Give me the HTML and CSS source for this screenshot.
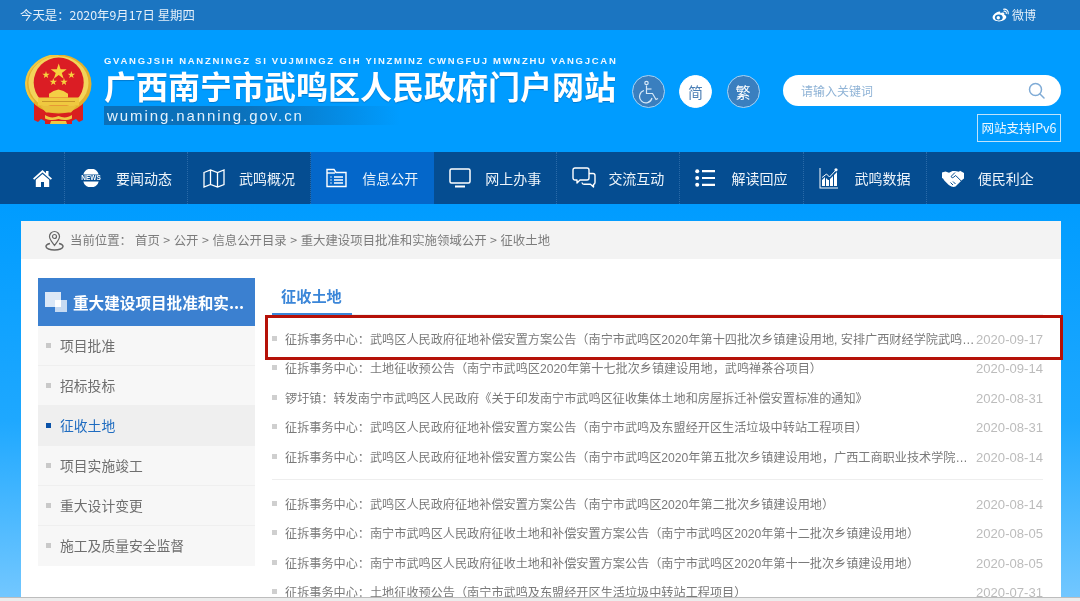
FILE: index.html
```html
<!DOCTYPE html>
<html lang="zh-CN">
<head>
<meta charset="utf-8">
<title>广西南宁市武鸣区人民政府门户网站</title>
<link rel="stylesheet" href="styles.css">
</head>
<body>
<div class="topbar">
  <span>今天是：2020年9月17日 星期四</span>
  <a class="weibo">
    <svg width="18" height="14" viewBox="0 0 18 14"><path d="M7.500 3.500C3.800 4 .6 7 .6 9.600c0 2.400 3 3.900 6.400 3.900 4 0 7.300-2.200 7.300-4.400 0-1.400-1.200-2-2.100-2.300.5-1.300.2-2.200-1-2.400-1-.1-2.300.5-2.900.8.300-1.200-.1-2-.8-1.700z" fill="#fff"/><ellipse cx="6.800" cy="9.500" rx="3.900" ry="2.900" fill="#1b75c1"/><circle cx="6.300" cy="9.700" r="1.700" fill="#fff"/><path d="M11.500 1.200c2.600-.6 5.300 1.500 4.700 4.600M11.900 3.200c1.400-.3 2.700.9 2.400 2.300" fill="none" stroke="#fff" stroke-width="1.100" stroke-linecap="round"/></svg>
    微博
  </a>
</div>
<header class="header">
  <svg class="emblem" width="67" height="71" viewBox="5 5 67 71">
    <path d="M14 50h11v21l-4-2-3 3-4-2zM63 50H52v21l4-2 3 3 4-2z" fill="#d91f1f"/>
    <path d="M25 60h27v14H25z" fill="#d91f1f"/>
    <ellipse cx="38.500" cy="34" rx="33" ry="29.500" fill="#e2b02c"/>
    <ellipse cx="38.500" cy="33" rx="30" ry="27" fill="#f3d45a"/>
    <path d="M38.500 5C22 5 7 17 6 33c0 7 3 14 8 19" fill="none" stroke="#efc743" stroke-width="2"/>
    <ellipse cx="38.700" cy="32.500" rx="25" ry="25" fill="#db1d24"/>
    <path d="M38.700 13.500l1.900 5.800h6.100l-4.900 3.600 1.900 5.800-5-3.600-4.900 3.600 1.900-5.800-5-3.600h6.100z" fill="#f7d23e"/>
    <path d="M26 21l.9 2.700h2.800l-2.300 1.700.9 2.700-2.300-1.700-2.300 1.700.9-2.700-2.300-1.700h2.800zM51.400 21l.9 2.700h2.800l-2.300 1.700.9 2.700-2.300-1.700-2.300 1.700.9-2.700-2.300-1.700h2.800zM33.300 28l.9 2.700H37l-2.300 1.700.9 2.700-2.300-1.700-2.300 1.700.9-2.700-2.300-1.700h2.800zM44 28l.9 2.700h2.800l-2.300 1.700.9 2.700-2.300-1.700-2.300 1.700.9-2.700-2.300-1.700h2.800z" fill="#f7d23e"/>
    <path d="M38.500 39.500l5 1.500 4 2.500h-18l4-2.500zM29 43.500h19v4H29z" fill="#f4cf45"/>
    <path d="M18 47.500h41v8H18z" fill="#f0c93f"/>
    <path d="M22 51h33v1H22z" fill="#c9952a"/>
    <path d="M20 55.500h37l-6 7H26z" fill="#eac03a"/>
    <path d="M25 65c4.500 3 9 3 13.500 1 4.500 2 9 2 13.500-1v3.500c-4.500 2-9 2-13.500.5-4.500 1.500-9 1.500-13.500-.5zM31 71h15l1 3H30z" fill="#efc843"/>
  </svg>
  <div class="brand">
    <div class="pinyin">GVANGJSIH NANZNINGZ SI VUJMINGZ GIH YINZMINZ CWNGFUJ MWNZHU VANGJCAN</div>
    <h1 class="title">广西南宁市武鸣区人民政府门户网站</h1>
    <div class="domain">wuming.nanning.gov.cn</div>
  </div>
  <div class="tools">
    <div class="toolrow">
      <a class="circle dark">
        <svg width="22" height="24" viewBox="0 0 22 24" fill="none" stroke="#d5e8f8" stroke-width="1.200"><circle cx="9.500" cy="3" r="1.700"/><path d="M9.500 5.500v8h6l3.500 6 2-1"/><path d="M9.500 9h5"/><path d="M7 10.500a6.300 6.300 0 1 0 8 7.500"/></svg>
      </a>
      <a class="circle light">简</a>
      <a class="circle dark">繁</a>
      <div class="search">
        <span>请输入关键词</span>
        <svg width="17" height="17" viewBox="0 0 17 17" fill="none" stroke="#7fabd6" stroke-width="1.500"><circle cx="7.500" cy="7.500" r="6"/><path d="M12 12l4 4" stroke-linecap="round"/></svg>
      </div>
    </div>
    <div class="ipv6">网站支持IPv6</div>
  </div>
</header>
<nav class="nav">
  <a class="navhome">
    <svg width="19" height="19" viewBox="0 0 19 19" fill="#fff"><path d="M9.500 1L0 9.500l1.200 1.300L9.500 3.500l8.300 7.300L19 9.500 15.500 6.400V2h-2.500v2.200z"/><path d="M9.500 5L2.800 10.800V18H8v-5h3v5h5.200v-7.200z"/></svg>
  </a>
  <a class="navitem">
    <span class="navicon"><svg width="22" height="18" viewBox="0 0 22 18"><path d="M3.300 5.500a8 8 0 0 1 15.400 0zM3.300 12.500a8 8 0 0 0 15.400 0z" fill="#fff"/><text x="11" y="11.300" text-anchor="middle" class="newstext">NEWS</text></svg></span>要闻动态
  </a>
  <a class="navitem">
    <span class="navicon"><svg width="22" height="19" viewBox="0 0 22 19" fill="none" stroke="#fff" stroke-width="1.300"><path d="M1 3.500L7.500 1l7 2.500L21 1v14.500L14.500 18l-7-2.500L1 18zM7.500 1v14.500M14.500 3.500V18"/></svg></span>武鸣概况
  </a>
  <a class="navitem active">
    <span class="navicon"><svg width="21" height="20" viewBox="0 0 21 20" fill="none" stroke="#fff" stroke-width="1.400"><path d="M1 18.500V1.500h7l2 3h10v14z"/><path d="M1 5h8"/><path d="M4.500 9h1M4.500 12h1M4.500 15h1M8 9h9M8 12h9M8 15h9"/></svg></span>信息公开
  </a>
  <a class="navitem">
    <span class="navicon"><svg width="22" height="20" viewBox="0 0 22 20" fill="none" stroke="#fff" stroke-width="1.500"><rect x="1" y="1" width="20" height="14" rx="1.500"/><path d="M6 18.500h10" stroke-width="2"/></svg></span>网上办事
  </a>
  <a class="navitem">
    <span class="navicon"><svg width="24" height="22" viewBox="0 0 24 22" fill="none" stroke="#fff" stroke-width="1.400" stroke-linejoin="round"><path d="M3 1h12a2 2 0 0 1 2 2v8a2 2 0 0 1-2 2H8l-3 3v-3H3a2 2 0 0 1-2-2V3a2 2 0 0 1 2-2z"/><path d="M17 6.500h4a2 2 0 0 1 2 2v7a2 2 0 0 1-1.500 1.900V20l-3-2.700H12a2 2 0 0 1-2-1.800"/></svg></span>交流互动
  </a>
  <a class="navitem">
    <span class="navicon"><svg width="20" height="18" viewBox="0 0 20 18" fill="#fff"><circle cx="2.200" cy="2.200" r="2"/><circle cx="2.200" cy="9" r="2"/><circle cx="2.200" cy="15.800" r="2"/><path d="M7 1h13v2.200H7zM7 7.900h13v2.200H7zM7 14.700h13v2.200H7z"/></svg></span>解读回应
  </a>
  <a class="navitem">
    <span class="navicon"><svg width="19" height="21" viewBox="0 0 19 21" fill="#fff"><path d="M.5 0h1v19.500H19v1H.5z"/><path d="M3 18v-6l3-3v9zM7 18V10l2 2 1 0v6zM11 18v-7l3-3v10zM15 18V7l3-3v14z"/><path d="M3 9.500L7.500 6l3 3L17 2" fill="none" stroke="#fff" stroke-width="1"/><circle cx="17" cy="1.800" r="1.600"/></svg></span>武鸣数据
  </a>
  <a class="navitem">
    <span class="navicon"><svg width="22" height="17" viewBox="0 0 22 17"><path d="M0 2.500l3.500-1 3.500 1.200L10.500 1h2.500l4 .8 1-1 4 2.200v5.500l-2 1.500-6.500 6.500-2 .5-2-.6-1.500-.6-1.500-1-4-4L1 8.500 0 8z" fill="#fff"/><path d="M13 2.500L9.500 6c-.8 1 .5 2.200 1.700 1.500l2.500-2 5.500 5.500M11 11.500l2.500 2.500M8.500 12.500l2.500 2.500" fill="none" stroke="#054d91" stroke-width="1"/></svg></span>便民利企
  </a>
</nav>
<main class="page">
  <div class="card">
    <div class="crumbs">
      <svg width="19" height="21" viewBox="0 0 19 21" fill="none" stroke="#666" stroke-width="1.200"><path d="M9.500 15.500C7 12 4.500 9.500 4.500 6.500a5 5 0 0 1 10 0c0 3-2.500 5.500-5 9z"/><circle cx="9.500" cy="6.500" r="2"/><path d="M5 13.500c-2.500.5-4 1.700-4 3 0 2 3.800 3.500 8.500 3.500s8.500-1.500 8.500-3.500c0-1.300-1.500-2.500-4-3" stroke-width="1.500"/></svg>
      <span class="here">当前位置：</span>
      <span class="trail">首页 &gt; 公开 &gt; 信息公开目录 &gt; 重大建设项目批准和实施领域公开 &gt; 征收土地</span>
    </div>
    <div class="content">
      <aside class="side">
        <div class="sidehead">
          <svg width="22" height="20" viewBox="0 0 22 20"><rect x="0" y="0" width="16" height="15" fill="#dbe8f7"/><rect x="10" y="8" width="12" height="12" fill="#c6daf2"/><rect x="10" y="8" width="6" height="7" fill="#fff"/></svg>
          <span>重大建设项目批准和实...</span>
        </div>
        <ul class="sidelist">
          <li>项目批准</li>
          <li>招标投标</li>
          <li class="on">征收土地</li>
          <li>项目实施竣工</li>
          <li>重大设计变更</li>
          <li>施工及质量安全监督</li>
        </ul>
      </aside>
      <section class="list">
        <div class="tabs"><span class="tab">征收土地</span></div>
        <ul class="rows">
          <li><span class="t">征拆事务中心：武鸣区人民政府征地补偿安置方案公告（南宁市武鸣区2020年第十四批次乡镇建设用地, 安排广西财经学院武鸣校区项目）</span><time>2020-09-17</time></li>
          <li><span class="t">征拆事务中心：土地征收预公告（南宁市武鸣区2020年第十七批次乡镇建设用地，武鸣禅茶谷项目）</span><time>2020-09-14</time></li>
          <li><span class="t">锣圩镇：转发南宁市武鸣区人民政府《关于印发南宁市武鸣区征收集体土地和房屋拆迁补偿安置标准的通知》</span><time>2020-08-31</time></li>
          <li><span class="t">征拆事务中心：武鸣区人民政府征地补偿安置方案公告（南宁市武鸣及东盟经开区生活垃圾中转站工程项目）</span><time>2020-08-31</time></li>
          <li><span class="t">征拆事务中心：武鸣区人民政府征地补偿安置方案公告（南宁市武鸣区2020年第五批次乡镇建设用地，广西工商职业技术学院武鸣校区项目）</span><time>2020-08-14</time></li>
        </ul>
        <ul class="rows second">
          <li><span class="t">征拆事务中心：武鸣区人民政府征地补偿安置方案公告（南宁市武鸣区2020年第二批次乡镇建设用地）</span><time>2020-08-14</time></li>
          <li><span class="t">征拆事务中心：南宁市武鸣区人民政府征收土地和补偿安置方案公告（南宁市武鸣区2020年第十二批次乡镇建设用地）</span><time>2020-08-05</time></li>
          <li><span class="t">征拆事务中心：南宁市武鸣区人民政府征收土地和补偿安置方案公告（南宁市武鸣区2020年第十一批次乡镇建设用地）</span><time>2020-08-05</time></li>
          <li><span class="t">征拆事务中心：土地征收预公告（南宁市武鸣及东盟经开区生活垃圾中转站工程项目）</span><time>2020-07-31</time></li>
        </ul>
      </section>
    </div>
    <div class="redbox"></div>
  </div>
</main>
<div class="edge"></div>
</body>
</html>
```
FILE: styles.css
```css
* { box-sizing: border-box; margin: 0; padding: 0; }
html, body { width: 1080px; height: 601px; overflow: hidden; }
body {
  font-family: "Noto Sans CJK SC", "Liberation Sans", sans-serif;
  background: #009cff;
  color: #777;
  filter: blur(.3px);
}
ul { list-style: none; }

.topbar {
  height: 30px;
  background: #1b75c1;
  color: #e4eff9;
  font-size: 12.400px;
  display: flex;
  align-items: center;
  justify-content: space-between;
  padding: 0 44px 0 20px;
}
.weibo { display: flex; align-items: center; gap: 2px; font-size: 12px; margin-top: -1px; }

.header {
  height: 122px;
  background: #009cff;
  display: flex;
  padding: 25px 19px 0 25px;
}
.emblem { flex: none; }
.brand { margin-left: 12px; width: 514px; flex: none; }
.pinyin {
  font-family: "Liberation Sans", sans-serif;
  font-size: 9.500px;
  font-weight: 700;
  letter-spacing: 1.730px;
  color: #f0f8ff;
  line-height: 12px;
  white-space: nowrap;
}
.title {
  font-size: 32px;
  font-weight: 700;
  line-height: 36px;
  color: #fff;
  white-space: nowrap;
  text-shadow: 0 1px 1px rgba(0, 60, 120, .35);
}
.domain {
  width: 296px;
  height: 19px;
  margin-top: 3px;
  padding-left: 3px;
  font-family: "Liberation Sans", sans-serif;
  font-size: 15px;
  line-height: 19px;
  letter-spacing: 1.920px;
  color: #e3f2fd;
  white-space: nowrap;
  background: linear-gradient(90deg, #0b70b9 0, #0b70b9 45%, rgba(11, 112, 185, 0) 100%);
}
.tools {
  margin-left: auto;
  display: flex;
  flex-direction: column;
  align-items: flex-end;
  padding-top: 20px;
}
.toolrow { display: flex; align-items: flex-start; }
.circle {
  width: 33px;
  height: 33px;
  border-radius: 50%;
  margin-right: 14.500px;
  display: flex;
  align-items: center;
  justify-content: center;
  font-size: 15px;
  border: 1px solid #a9d3f4;
}
.circle.dark { background: #3a7fbf; color: #fff; }
.circle.light { background: #fff; color: #4b7fb5; border-color: #fff; }
.circle:nth-child(3) { margin-right: 23.500px; }
.search {
  width: 278px;
  height: 31px;
  background: #fff;
  border-radius: 16px;
  display: flex;
  align-items: center;
  justify-content: space-between;
  padding: 0 16px 0 18px;
  font-size: 12px;
  color: #8fb3d6;
}
.ipv6 {
  margin-top: 6px;
  width: 84px;
  height: 28px;
  border: 1px solid #bfe3fb;
  color: #eef8ff;
  font-size: 12.500px;
  line-height: 26px;
  text-align: center;
  white-space: nowrap;
}

.nav {
  height: 52px;
  background: #054d91;
  display: flex;
  color: #eef4fa;
  font-size: 14px;
}
.navhome {
  width: 65px;
  padding-left: 33px;
  display: flex;
  align-items: center;
  border-right: 1px dotted #2a6aa8;
}
.navitem {
  width: 123.100px;
  display: flex;
  align-items: center;
  padding-left: 15px;
  border-right: 1px dotted #2a6aa8;
}
.navitem:last-child { border-right: 0; }
.navitem.active { background: #0467ca; border-right: 0; }
.navicon { width: 36px; flex: none; display: flex; align-items: center; }
.newstext {
  font-family: "Liberation Sans", sans-serif;
  font-size: 6.500px;
  font-weight: 700;
  fill: #fff;
}

.page {
  height: 393px;
  padding: 17px 19px 0 21px;
  overflow: hidden;
  background: linear-gradient(180deg, #009cff 0, #1ea8ff 55%, #72c7ff 100%);
}
.card { position: relative; height: 376px; background: #fff; }
.crumbs {
  height: 38px;
  background: #f3f3f3;
  display: flex;
  align-items: center;
  padding-left: 24px;
  font-size: 12.400px;
  color: #7c7c7c;
}
.here { margin-left: 6px; width: 65px; }
.trail { word-spacing: .75px; }
.content { display: flex; padding: 19px 18px 0 17px; }

.side { width: 217px; flex: none; }
.sidehead {
  height: 48px;
  background: #3b80d0;
  color: #fff;
  font-weight: 700;
  font-size: 15.600px;
  display: flex;
  align-items: center;
  gap: 6px;
  padding-left: 7px;
  white-space: nowrap;
}
.sidelist li {
  height: 40px;
  line-height: 39px;
  background: #f7f7f7;
  border-bottom: 1px solid #efefef;
  font-size: 13.800px;
  color: #6f6f6f;
  padding-left: 22px;
  position: relative;
}
.sidelist li:last-child { border-bottom: 0; }
.sidelist li::before {
  content: "";
  position: absolute;
  left: 8px;
  top: 17px;
  width: 5px;
  height: 5px;
  background: #c9c9c9;
}
.sidelist li.on { background: #efefef; color: #1f6cc0; }
.sidelist li.on::before { background: #0a52a8; }

.list { flex: 1; margin-left: 17px; min-width: 0; }
.tabs { height: 37px; border-bottom: 1px solid #eeeeee; }
.tab {
  display: inline-block;
  width: 80px;
  height: 37px;
  border-bottom: 2px solid #3b86d8;
  padding-left: 9px;
  font-size: 15.200px;
  font-weight: 700;
  line-height: 35px;
  color: #3b86d8;
}
.rows { padding-top: 8.500px; padding-bottom: 7.500px; border-bottom: 1px solid #eeeeee; }
.rows.second { padding-top: 9px; border-bottom: 0; }
.rows li {
  height: 29.500px;
  display: flex;
  align-items: center;
  position: relative;
  padding-left: 13px;
  font-size: 12.150px;
  color: #7a7a7a;
}
.rows li::before {
  content: "";
  position: absolute;
  left: 0;
  top: 12px;
  width: 5px;
  height: 5px;
  background: #cfcfcf;
}
.t {
  flex: 1;
  min-width: 0;
  overflow: hidden;
  white-space: nowrap;
  text-overflow: ellipsis;
  font-family: "Liberation Sans", "Noto Sans CJK SC", sans-serif;
}
time {
  flex: none;
  margin-left: 1px;
  width: 67px;
  padding-top: 2px;
  font-family: "Liberation Sans", sans-serif;
  font-size: 13.100px;
  color: #bcbcbc;
  white-space: nowrap;
}
.redbox {
  position: absolute;
  left: 244px;
  top: 94px;
  width: 798px;
  height: 45px;
  border: 3px solid #b51108;
}
.edge { height: 4px; background: #ececec; border-top: 1px solid #bdbdbd; }
```
